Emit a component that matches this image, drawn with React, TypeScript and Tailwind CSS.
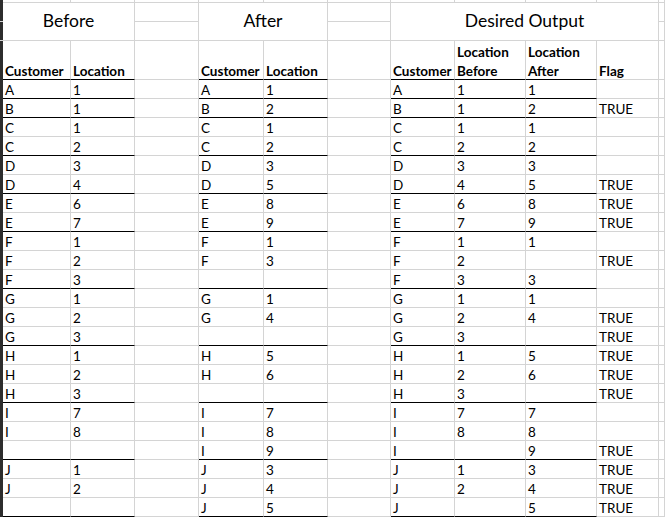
import React from 'react';

type Row = {
  before: [string, string];
  after: [string, string];
  desired: [string, string, string, string];
};

// one line per spreadsheet row, last row of each customer gets the black rule
const rows: Row[] = [
  { before: ['A', '1'], after: ['A', '1'], desired: ['A', '1', '1', ''] },
  { before: ['B', '1'], after: ['B', '2'], desired: ['B', '1', '2', 'TRUE'] },
  { before: ['C', '1'], after: ['C', '1'], desired: ['C', '1', '1', ''] },
  { before: ['C', '2'], after: ['C', '2'], desired: ['C', '2', '2', ''] },
  { before: ['D', '3'], after: ['D', '3'], desired: ['D', '3', '3', ''] },
  { before: ['D', '4'], after: ['D', '5'], desired: ['D', '4', '5', 'TRUE'] },
  { before: ['E', '6'], after: ['E', '8'], desired: ['E', '6', '8', 'TRUE'] },
  { before: ['E', '7'], after: ['E', '9'], desired: ['E', '7', '9', 'TRUE'] },
  { before: ['F', '1'], after: ['F', '1'], desired: ['F', '1', '1', ''] },
  { before: ['F', '2'], after: ['F', '3'], desired: ['F', '2', '', 'TRUE'] },
  { before: ['F', '3'], after: ['', ''], desired: ['F', '3', '3', ''] },
  { before: ['G', '1'], after: ['G', '1'], desired: ['G', '1', '1', ''] },
  { before: ['G', '2'], after: ['G', '4'], desired: ['G', '2', '4', 'TRUE'] },
  { before: ['G', '3'], after: ['', ''], desired: ['G', '3', '', 'TRUE'] },
  { before: ['H', '1'], after: ['H', '5'], desired: ['H', '1', '5', 'TRUE'] },
  { before: ['H', '2'], after: ['H', '6'], desired: ['H', '2', '6', 'TRUE'] },
  { before: ['H', '3'], after: ['', ''], desired: ['H', '3', '', 'TRUE'] },
  { before: ['I', '7'], after: ['I', '7'], desired: ['I', '7', '7', ''] },
  { before: ['I', '8'], after: ['I', '8'], desired: ['I', '8', '8', ''] },
  { before: ['', ''], after: ['I', '9'], desired: ['I', '', '9', 'TRUE'] },
  { before: ['J', '1'], after: ['J', '3'], desired: ['J', '1', '3', 'TRUE'] },
  { before: ['J', '2'], after: ['J', '4'], desired: ['J', '2', '4', 'TRUE'] },
  { before: ['', ''], after: ['J', '5'], desired: ['J', '', '5', 'TRUE'] },
];

const groupEnds = [0, 1, 3, 5, 7, 10, 13, 16, 19, 22];

const Cell: React.FC<{ text?: string; ruled?: boolean }> = ({ text, ruled }) => (
  <div
    className={
      ruled
        ? 'flex items-end pl-[2px] leading-[16px] whitespace-nowrap overflow-hidden border-r border-r-[#d4d4d4] border-b border-b-black'
        : 'flex items-end pl-[2px] leading-[16px] whitespace-nowrap overflow-hidden border-r border-b border-[#d4d4d4]'
    }
  >
    {text}
  </div>
);

const Header: React.FC<{ lines: string[]; ruled?: boolean }> = ({ lines, ruled }) => (
  <div
    className={
      ruled
        ? 'flex flex-col justify-end gap-[3px] pl-[2px] font-bold leading-[16px] whitespace-nowrap border-r border-r-[#d4d4d4] border-b border-b-black'
        : 'flex flex-col justify-end gap-[3px] pl-[2px] font-bold leading-[16px] whitespace-nowrap border-r border-b border-[#d4d4d4]'
    }
  >
    {lines.map((l) => (
      <div key={l}>{l}</div>
    ))}
  </div>
);

const Title: React.FC<{ text: string; span: 'two' | 'four' }> = ({ text, span }) => (
  <div
    className={
      span === 'two'
        ? 'col-span-2 row-span-2 flex items-center justify-center text-[17.5px] border-r border-b border-[#d4d4d4]'
        : 'col-span-4 row-span-2 flex items-center justify-center text-[17.5px] border-r border-b border-[#d4d4d4]'
    }
  >
    {text}
  </div>
);

const Strip: React.FC<{ line?: boolean }> = ({ line }) => (
  <div className={line ? 'bg-[#2d2d2d] border-b border-[#d4d4d4]' : 'bg-[#2d2d2d]'} />
);

const Blank: React.FC = () => <div className="border-r border-b border-[#d4d4d4]" />;

export default function App() {
  return (
    <div className="w-[665px] h-[517px] overflow-hidden bg-white text-black text-[13.5px] font-[Lato,sans-serif]">
      <div className="grid grid-cols-[3px_68px_64px_64px_65px_64px_63px_64px_71px_71px_62px_1fr] grid-rows-[3px_19px_19px_39px_repeat(23,19px)] [&>div]:box-border">
        {/* partial top row */}
        <Strip />
        {Array.from({ length: 11 }).map((_, i) => (
          <Blank key={i} />
        ))}

        {/* title rows */}
        <Strip line />
        <Title text="Before" span="two" />
        <Blank />
        <Title text="After" span="two" />
        <Blank />
        <Title text="Desired Output" span="four" />
        <Blank />
        <Strip line />
        <Blank />
        <Blank />
        <Blank />

        {/* header row */}
        <Strip />
        <Header lines={['Customer']} ruled />
        <Header lines={['Location']} ruled />
        <Blank />
        <Header lines={['Customer']} ruled />
        <Header lines={['Location']} ruled />
        <Blank />
        <Header lines={['Customer']} ruled />
        <Header lines={['Location', 'Before']} ruled />
        <Header lines={['Location', 'After']} ruled />
        <Header lines={['Flag']} />
        <Blank />

        {rows.map((r, i) => {
          const ruled = groupEnds.includes(i);
          return (
            <React.Fragment key={i}>
              <Strip />
              <Cell text={r.before[0]} ruled={ruled} />
              <Cell text={r.before[1]} ruled={ruled} />
              <Blank />
              <Cell text={r.after[0]} ruled={ruled} />
              <Cell text={r.after[1]} ruled={ruled} />
              <Blank />
              <Cell text={r.desired[0]} ruled={ruled} />
              <Cell text={r.desired[1]} ruled={ruled} />
              <Cell text={r.desired[2]} ruled={ruled} />
              <Cell text={r.desired[3]} />
              <Blank />
            </React.Fragment>
          );
        })}
      </div>
    </div>
  );
}
